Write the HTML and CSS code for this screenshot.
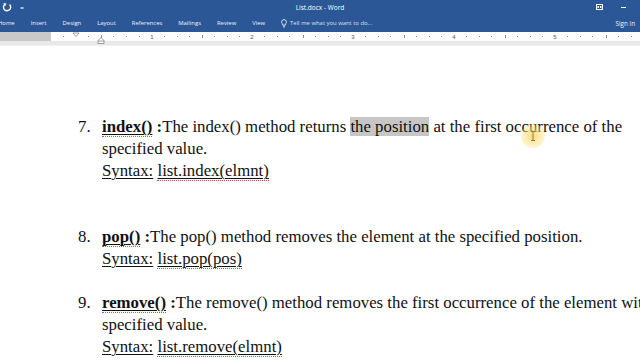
FILE: index.html
```html
<!DOCTYPE html>
<html>
<head>
<meta charset="utf-8">
<link rel="stylesheet" href="styles.css">
</head>
<body>
<div class="app">
  <div class="titlebar">
    <div class="qat">
      <svg class="undo" width="10" height="10" viewBox="0 0 10 10"><path d="M3 2.2 A3.6 3.6 0 1 0 7.6 2.6" fill="none" stroke="#fff" stroke-width="1.4"/><path d="M1.2 1 L4.4 1.4 L3.2 4.2 Z" fill="#fff"/></svg>
      <span class="qat-more">=</span>
    </div>
    <div class="title">List.docx - Word</div>
    <div class="winctl">
      <svg width="7" height="6" viewBox="0 0 7 6"><rect x="0.5" y="0.5" width="6" height="5" fill="none" stroke="#fff" stroke-width="1"/><rect x="1.5" y="2" width="1.5" height="2" fill="#fff"/><rect x="4" y="2" width="1.5" height="2" fill="#fff"/></svg>
      <span class="minimize"></span>
    </div>
  </div>
  <div class="tabbar">
    <div class="tabs">
      <span class="tab">Home</span>
      <span class="tab">Insert</span>
      <span class="tab">Design</span>
      <span class="tab">Layout</span>
      <span class="tab">References</span>
      <span class="tab">Mailings</span>
      <span class="tab">Review</span>
      <span class="tab">View</span>
      <span class="tellme">
        <svg width="6" height="9" viewBox="0 0 6 9"><path d="M3 0.6 A2.4 2.4 0 0 1 4.6 4.8 L4.2 6.2 L1.8 6.2 L1.4 4.8 A2.4 2.4 0 0 1 3 0.6 Z" fill="none" stroke="#fff" stroke-width="0.8"/><path d="M2 7.2 H4 M2.3 8.2 H3.7" stroke="#fff" stroke-width="0.7"/></svg>
        Tell me what you want to do...
      </span>
    </div>
    <span class="signin">Sign in</span>
  </div>
  <div class="ruler">
    <div class="ruler-margin"></div>
    <svg class="ruler-scale" width="589" height="13" viewBox="0 0 589 13">
      <rect x="0" y="0" width="589" height="9" fill="#fdfdfd"/>
      <g fill="#8a8a8a">
        <rect x="12" y="4" width="1" height="1"/><rect x="37" y="4" width="1" height="1"/><rect x="62" y="4" width="1" height="1"/><rect x="75" y="4" width="1" height="1"/>
        <rect x="88" y="4" width="1" height="1"/><rect x="113" y="4" width="1" height="1"/><rect x="126" y="4" width="1" height="1"/><rect x="138" y="4" width="1" height="1"/>
        <rect x="163" y="4" width="1" height="1"/><rect x="176" y="4" width="1" height="1"/><rect x="188" y="4" width="1" height="1"/><rect x="213" y="4" width="1" height="1"/><rect x="226" y="4" width="1" height="1"/><rect x="238" y="4" width="1" height="1"/>
        <rect x="264" y="4" width="1" height="1"/><rect x="277" y="4" width="1" height="1"/><rect x="289" y="4" width="1" height="1"/><rect x="314" y="4" width="1" height="1"/><rect x="327" y="4" width="1" height="1"/><rect x="339" y="4" width="1" height="1"/>
        <rect x="365" y="4" width="1" height="1"/><rect x="378" y="4" width="1" height="1"/><rect x="390" y="4" width="1" height="1"/><rect x="415" y="4" width="1" height="1"/><rect x="428" y="4" width="1" height="1"/><rect x="440" y="4" width="1" height="1"/>
        <rect x="466" y="4" width="1" height="1"/><rect x="479" y="4" width="1" height="1"/><rect x="491" y="4" width="1" height="1"/><rect x="516" y="4" width="1" height="1"/><rect x="529" y="4" width="1" height="1"/><rect x="541" y="4" width="1" height="1"/>
        <rect x="567" y="4" width="1" height="1"/><rect x="580" y="4" width="1" height="1"/>
        <rect x="50" y="3" width="1" height="3"/><rect x="151" y="3" width="1" height="3"/><rect x="252" y="3" width="1" height="3"/><rect x="353" y="3" width="1" height="3"/><rect x="454" y="3" width="1" height="3"/><rect x="555" y="3" width="1" height="3"/>
      </g>
      <g font-family="Liberation Sans, sans-serif" font-size="6" fill="#555" text-anchor="middle">
        <text x="101" y="7">1</text><text x="201" y="7">2</text><text x="302" y="7">3</text><text x="403" y="7">4</text><text x="504" y="7">5</text>
      </g>
      <path d="M22 1 H28 L25 4.5 Z" fill="#fff" stroke="#777" stroke-width="0.7"/>
      <path d="M47 8.5 L50 5.5 L53 8.5 V11.5 H47 Z" fill="#fff" stroke="#777" stroke-width="0.7"/>
      <path d="M47 9 H53" stroke="#777" stroke-width="0.7"/>
    </svg>
  </div>
  <div class="doc">
    <div class="item">
      <span class="num">7.</span>
      <div class="body">
        <div class="line"><b><span class="u sq-blue">index()</span> :</b>The index() method returns <span class="hl">the position</span> at the first occurrence of the</div>
        <div class="line">specified value.</div>
        <div class="line"><span class="u">Syntax:</span> <span class="u sq-red">list.index(elmnt)</span></div>
      </div>
    </div>
    <div class="blank"></div>
    <div class="blank"></div>
    <div class="item">
      <span class="num">8.</span>
      <div class="body">
        <div class="line"><b><span class="u sq-blue">pop()</span> :</b>The pop() method removes the element at the specified position.</div>
        <div class="line"><span class="u">Syntax:</span> <span class="u sq-red">list.pop(pos)</span></div>
      </div>
    </div>
    <div class="blank"></div>
    <div class="item">
      <span class="num">9.</span>
      <div class="body">
        <div class="line"><b><span class="u sq-blue">remove()</span> :</b>The remove() method removes the first occurrence of the element with the</div>
        <div class="line">specified value.</div>
        <div class="line"><span class="u">Syntax:</span> <span class="u sq-red">list.remove(elmnt)</span></div>
      </div>
    </div>
  </div>
  <div class="cursor">
    <svg width="6" height="10" viewBox="0 0 6 10"><path d="M1 0.5 H5 M3 0.5 V9.5 M1 9.5 H5" stroke="#8a7a50" stroke-width="1" fill="none"/></svg>
  </div>
</div>
</body>
</html>
```
FILE: styles.css
```css
html, body {
  margin: 0;
  padding: 0;
}
body {
  width: 640px;
  height: 360px;
  overflow: hidden;
  background: #fff;
}
.app {
  position: relative;
  width: 640px;
  height: 360px;
  overflow: hidden;
}
.titlebar {
  height: 14px;
  background: #2b5797;
  display: flex;
  align-items: center;
  justify-content: space-between;
  color: #fff;
  font-family: "Open Sans", "Noto Sans", sans-serif;
  font-size: 6.5px;
}
.qat {
  display: flex;
  align-items: center;
  gap: 8px;
  padding-left: 2px;
  width: 100px;
}
.qat-more {
  font-size: 7px;
  line-height: 1;
}
.title {
  flex: 1;
  text-align: center;
  margin-left: -2px;
}
.winctl {
  width: 100px;
  display: flex;
  justify-content: flex-end;
  align-items: center;
  gap: 18px;
  padding-right: 14px;
  box-sizing: border-box;
}
.minimize {
  width: 5px;
  height: 1px;
  background: #fff;
}
.tabbar {
  height: 18px;
  background: #2b5797;
  display: flex;
  align-items: center;
  justify-content: space-between;
  color: #eef2fa;
  font-family: "Open Sans", "Noto Sans", sans-serif;
  font-size: 5.9px;
}
.tabs {
  display: flex;
  align-items: center;
  gap: 16px;
  margin-left: -2px;
}
.tellme {
  display: flex;
  align-items: center;
  gap: 3px;
  color: #d6e0f0;
}
.signin {
  padding-right: 5px;
  font-size: 6.3px;
}
.ruler {
  height: 13px;
  background: #e9e9e9;
  display: flex;
  align-items: flex-start;
  border-bottom: 1px solid #f1f1f1;
}
.ruler-margin {
  width: 51px;
  height: 9px;
  background: #c9c9c9;
}
.ruler-scale {
  display: block;
}
.doc {
  padding-top: 70px;
  padding-left: 78px;
  font-family: "Liberation Serif", "Times New Roman", serif;
  font-size: 16.8px;
  line-height: 22px;
  color: #111;
}
.item {
  display: flex;
}
.num {
  width: 24px;
  flex: none;
}
.line {
  white-space: nowrap;
}
.blank {
  height: 22px;
}
.u {
  text-decoration: underline;
  text-decoration-thickness: 1px;
  text-underline-offset: 2px;
}
.sq-red {
  border-bottom: 1px dotted #e0484c;
}
.sq-blue {
  border-bottom: 1px dotted #6a6ad0;
}
.hl {
  background: #c6c6c6;
}
.cursor {
  position: absolute;
  left: 521px;
  top: 124px;
  width: 24px;
  height: 24px;
  border-radius: 50%;
  background: radial-gradient(circle, rgba(255, 214, 90, 0.85) 0%, rgba(255, 225, 120, 0.55) 45%, rgba(255, 240, 190, 0) 100%);
  display: flex;
  align-items: center;
  justify-content: center;
}
```
